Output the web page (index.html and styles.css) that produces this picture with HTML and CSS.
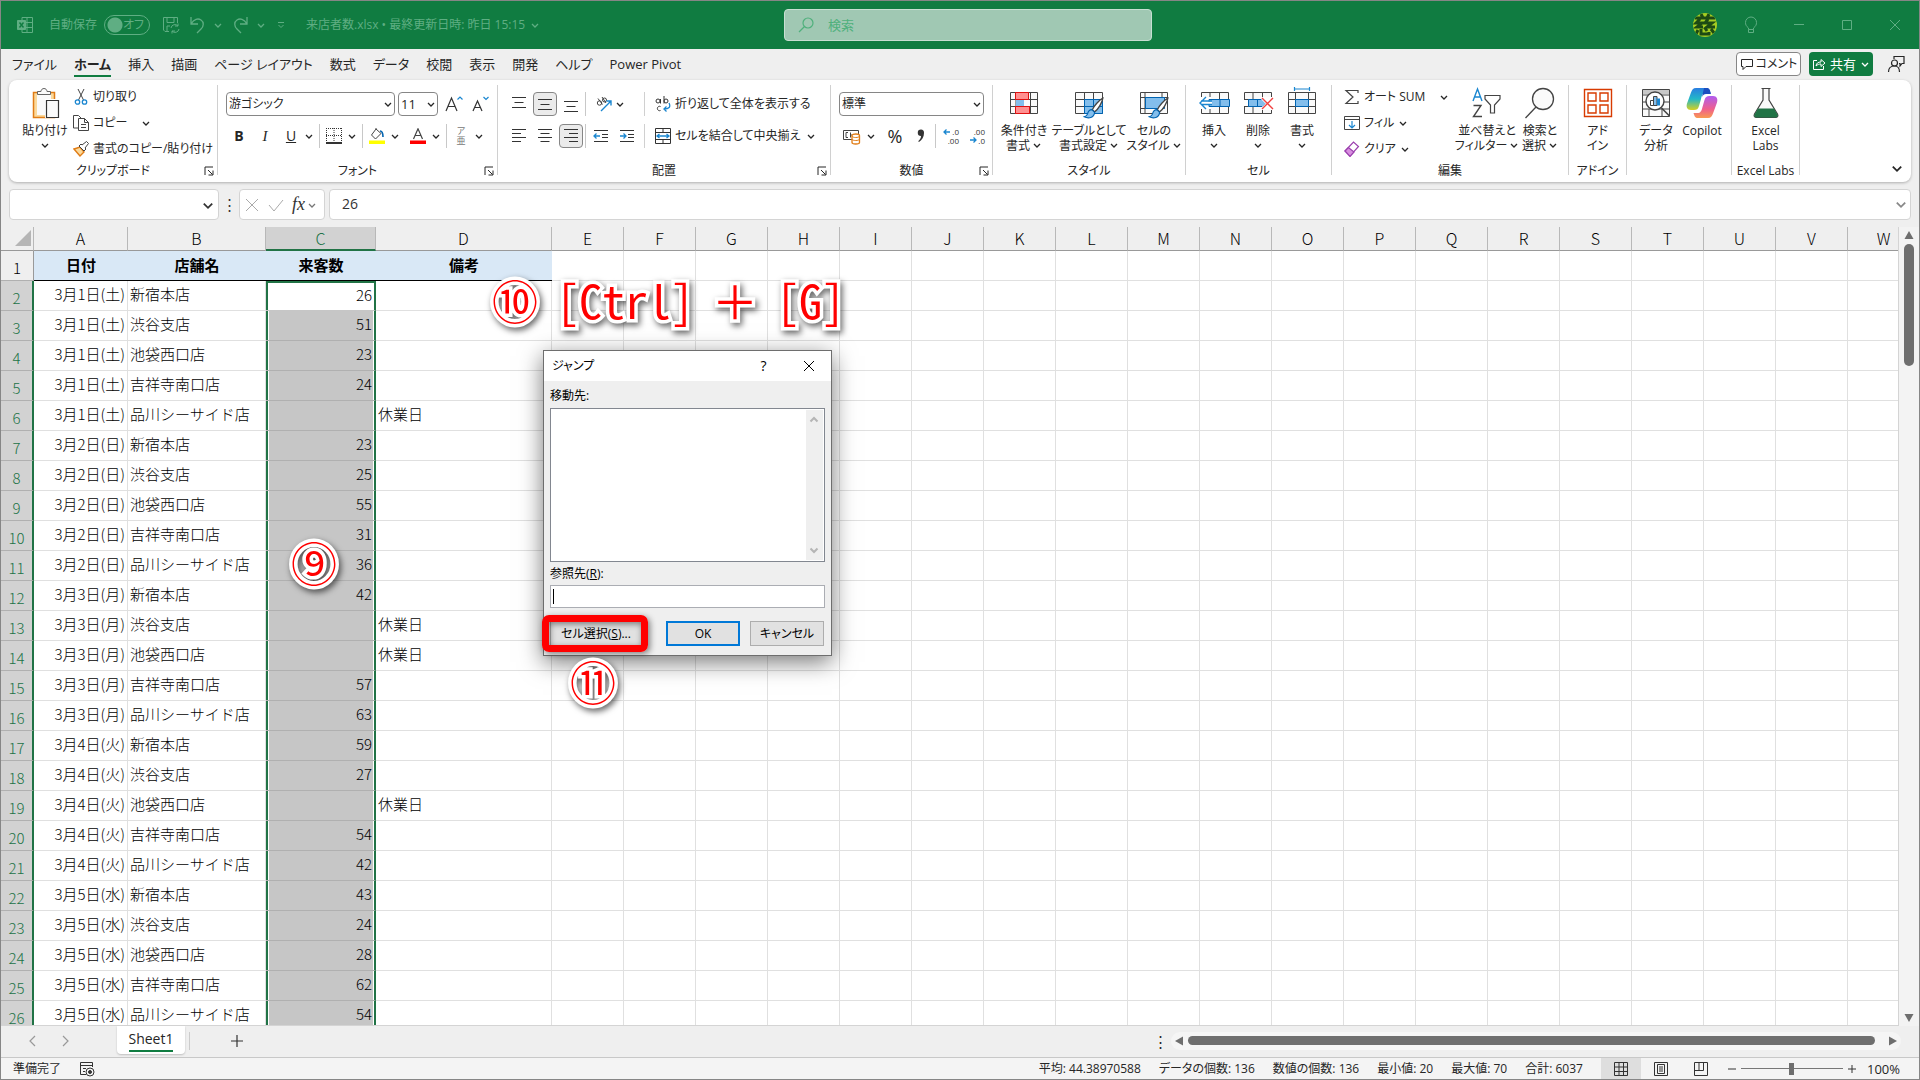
FILE: index.html
```html
<!DOCTYPE html>
<html lang="ja">
<head>
<meta charset="utf-8">
<title>来店者数.xlsx</title>
<link rel="stylesheet" href="styles.css">
</head>
<body>
<svg class="defs" aria-hidden="true">
  <symbol id="chev" viewBox="0 0 10 10"><path d="M2 4l3 3 3-3" fill="none" stroke="currentColor" stroke-width="1.3"/></symbol>
  <symbol id="launch" viewBox="0 0 10 10"><path d="M9 1H1v8M4 4l4.500 4.500M9 4.500V9H4.500" fill="none" stroke="currentColor"/></symbol>
  <symbol id="brush" viewBox="0 0 20 20"><path d="M18.500 1c-3 1.500-8.500 7.500-9.500 10.500l2 2C14 11.500 18 5 18.500 1z" fill="#fff" stroke="#444" stroke-width="1.200"/><path d="M8.500 11.500c-3 0-3.500 2-4 4-.5 1.500-1.500 2-3 2.500 4 2 9 1 9.500-4z" fill="#83beec" stroke="#0063b1"/></symbol>
</svg>

<div class="app">
  <header class="title">
    <div class="title-left">
      <svg class="i16" viewBox="0 0 16 16" fill="none" stroke="currentColor"><path d="M5 3V.5h10.500v15H5V13M10 .5v15M5 5.500h10.500M5 10.500h10.500"/><path d="M.5 3.500h8v9h-8z" fill="#5fae83"/><path d="M2.500 5.500l4 5M6.500 5.500l-4 5" stroke="#107c41" stroke-width="1.400"/></svg>
      <label class="autosave"><span>自動保存</span><span class="switch"><input type="checkbox"><span>オフ</span></span></label>
      <button class="tb" aria-label="保存"><svg class="i18" viewBox="0 0 18 18" fill="none" stroke="currentColor"><path d="M7 15.500H3L1.500 14V1.500h14V7M5 1.500v5h7v-5M5 15v-5h3M9 12a4 4 0 0 1 7-2M16 7.500V10h-3M17 13a4 4 0 0 1-7 2M10 17.500V15h3"/></svg></button>
      <button class="tb" aria-label="元に戻す"><svg class="i18" viewBox="0 0 18 18" fill="none" stroke="currentColor" stroke-width="1.300"><path d="M2 1v7h7M2 8c3-5 7-6 10-4s3 6 0 9l-4 4"/></svg><svg class="cv"><use href="#chev"/></svg></button>
      <button class="tb" aria-label="やり直し"><svg class="i18" viewBox="0 0 18 18" fill="none" stroke="currentColor" stroke-width="1.300"><path d="M15 1v7H8M15 8c-3-5-7-6-10-4s-3 6 0 9l4 4"/></svg><svg class="cv"><use href="#chev"/></svg></button>
      <button class="tb qat" aria-label="クイック アクセス ツール バーのユーザー設定"><svg class="cv" viewBox="0 0 10 10" fill="none" stroke="currentColor"><path d="M2 2.500h6M2.500 5l2.500 2.500L7.500 5"/></svg></button>
      <span class="doc">来店者数.xlsx • 最終更新日時: 昨日 15:15</span><svg class="cv"><use href="#chev"/></svg>
    </div>
    <label class="search"><svg class="i18" viewBox="0 0 18 18" fill="none" stroke="currentColor" stroke-width="1.200"><circle cx="11" cy="7" r="5"/><path d="M7.500 10.500L2 16"/></svg><input type="text" placeholder="検索" aria-label="検索"></label>
    <div class="title-right">
      <svg class="avatar" viewBox="0 0 24 24"><clipPath id="round"><circle cx="12" cy="12" r="12"/></clipPath><circle cx="12" cy="12" r="12" fill="#a4cc22"/><g clip-path="url(#round)"><path d="M2 5h20M8 1l2 4M16 1l-2 4M7 6l-4 4h6l-5 4h6M15 6l-3 4h7l-5 4h8M5 17l-2 4M8 16v5h8v-2M12 15l2 3M18 16l3 4" fill="none" stroke="#1d4a14" stroke-width="3"/></g></svg>
      <button class="wb" aria-label="ヒント"><svg class="i18" viewBox="0 0 18 18" fill="none" stroke="currentColor"><path d="M6.500 13.500V12C4 10 3.500 8.500 3.500 6.500a5.500 5.500 0 0 1 11 0c0 2-.5 3.500-3 5.500v1.500zM6.500 13.500v3h5v-3"/></svg></button>
      <button class="wb" aria-label="最小化"><svg class="i18" viewBox="0 0 18 18" stroke="currentColor"><path d="M4 8.500h10"/></svg></button>
      <button class="wb" aria-label="最大化"><svg class="i18" viewBox="0 0 18 18" stroke="currentColor" fill="none"><path d="M4.500 4.500h9v9h-9z"/></svg></button>
      <button class="wb" aria-label="閉じる"><svg class="i18" viewBox="0 0 18 18" stroke="currentColor"><path d="M4 4l10 10M14 4L4 14"/></svg></button>
    </div>
  </header>

  <nav class="tabs">
    <a href="#">ファイル</a><a href="#" class="on">ホーム</a><a href="#">挿入</a><a href="#">描画</a><a href="#">ページ レイアウト</a><a href="#">数式</a><a href="#">データ</a><a href="#">校閲</a><a href="#">表示</a><a href="#">開発</a><a href="#">ヘルプ</a><a href="#">Power Pivot</a>
    <div class="tabs-right">
      <button class="comment"><svg class="i14" viewBox="0 0 14 14" fill="none" stroke="currentColor"><path d="M1.500 2.500h11v7H6l-3 3v-3H1.500z"/></svg>コメント</button>
      <button class="share"><svg class="i14" viewBox="0 0 14 14" fill="none" stroke="currentColor"><path d="M5 3.500H1.500v9h10V9M4 9c.5-3 2-4 5-4V2.500L13 6 9 9.500V7C7 7 5.500 7.500 4 9z"/></svg>共有<svg class="cv"><use href="#chev"/></svg></button>
      <button class="plain" aria-label="ユーザー"><svg class="i18" viewBox="0 0 18 18" fill="none" stroke="currentColor" stroke-width="1.200"><path d="M7 4V1.500h10v7h-2l-2 2.500V8.500h-1"/><circle cx="7.500" cy="8" r="3"/><path d="M1.500 17c0-4 2.500-6 6-6s5 2 5 6"/></svg></button>
    </div>
  </nav>

  <section class="ribbon">
    <div class="grp g-clip">
      <div class="body">
        <button class="big w56"><svg class="i32" viewBox="0 0 32 32" fill="none"><path d="M4.500 5.500h21v25h-21z" fill="#fbd99b" stroke="#e07c16" stroke-width="1.500"/><path d="M8 8h14v20H8z" fill="#fafafa"/><path d="M8.500 7.500v-3H12c0-4 6-4 6 0h3.500v3z" fill="#fafafa" stroke="#666"/><path d="M16 12h15v19H16z" fill="#fff"/><path d="M17.500 13.500h12v17h-12z" fill="#fafafa" stroke="#333" stroke-width="1.200"/></svg><span>貼り付け</span><svg class="cv"><use href="#chev"/></svg></button>
        <div class="list">
          <button><svg class="i16" viewBox="0 0 16 16" fill="none"><path d="M5 0l5.500 11M11 0L5.500 11" stroke="#444"/><circle cx="4.500" cy="13" r="2.200" stroke="#1a86d0" stroke-width="1.300"/><circle cx="11.500" cy="13" r="2.200" stroke="#1a86d0" stroke-width="1.300"/></svg>切り取り</button>
          <button><svg class="i16" viewBox="0 0 16 16" fill="#fff" stroke="#444"><path d="M.5.500h5L8 3v10H.5z"/><path d="M5.500 3.500h6l4 4v8h-10zM11.500 3.500v4h4M8 9.500h5M8 12.500h5"/></svg>コピー<svg class="cv far"><use href="#chev"/></svg></button>
          <button><svg class="i16" viewBox="0 0 16 16"><path d="M1 8l6-2 4 5-4 4z" fill="#fbd99b" stroke="#e07c16" stroke-width="1.400"/><path d="M6 5l5 5 2-2-1-1 3.500-4.500L13.500.5 9 4 8 3z" fill="#fff" stroke="#444"/></svg>書式のコピー/貼り付け</button>
        </div>
      </div>
      <div class="name">クリップボード<svg class="ln"><use href="#launch"/></svg></div>
    </div>

    <div class="grp g-font">
      <div class="body rows">
        <div class="row">
          <div class="combo w169"><select aria-label="フォント"><option>游ゴシック</option></select><svg class="cv"><use href="#chev"/></svg></div>
          <div class="combo w40"><select aria-label="フォント サイズ"><option>11</option></select><svg class="cv"><use href="#chev"/></svg></div>
          <button class="ib26 ml" aria-label="拡大"><svg class="i18" viewBox="0 0 18 18" fill="none"><path d="M1 16L6.500 3 12 16M3 11.500h7" stroke="#333" stroke-width="1.200"/><path d="M12.500 4.500L15 2l2.500 2.500" stroke="#1a86d0" stroke-width="1.200"/></svg></button>
          <button class="ib26" aria-label="縮小"><svg class="i18" viewBox="0 0 18 18" fill="none"><path d="M2 16L6.500 6 11 16M3.500 12.500h6" stroke="#333" stroke-width="1.200"/><path d="M12.500 2L15 4.500 17.500 2" stroke="#1a86d0" stroke-width="1.200"/></svg></button>
        </div>
        <div class="row">
          <button class="ib26 fb">B</button><button class="ib26 fi">I</button><button class="ib26 fu">U</button><svg class="cv"><use href="#chev"/></svg>
          <i class="sep"></i>
          <button class="split" aria-label="罫線"><svg class="i16" viewBox="0 0 16 16" stroke="#333" fill="none"><path d="M0 .5h16M.5 0v14M15.500 0v14M8 0v14M0 7.500h16" stroke-dasharray="1 1"/><path d="M0 15h16" stroke="#000" stroke-width="1.600"/></svg><svg class="cv"><use href="#chev"/></svg></button>
          <i class="sep"></i>
          <button class="split" aria-label="塗りつぶし"><svg class="i16" viewBox="0 0 16 16"><path d="M7 1L2.500 7l4 4L12 5.500 7 1V0" fill="none" stroke="#444"/><path d="M11 3c3 0 3 3 3 6" fill="none" stroke="#0063b1" stroke-width="1.600"/><path d="M0 12.500h16V16H0z" fill="#ff0"/></svg><svg class="cv"><use href="#chev"/></svg></button>
          <button class="split ml10" aria-label="フォントの色"><svg class="i16" viewBox="0 0 16 16"><path d="M3.500 11L8 .8 12.500 11M5 7.500h6" fill="none" stroke="#444" stroke-width="1.200"/><path d="M0 12.500h16V16H0z" fill="#f00"/></svg><svg class="cv"><use href="#chev"/></svg></button>
          <i class="sep"></i>
          <button class="split" aria-label="ふりがな"><span class="ruby"><small>ア</small><small>亜</small></span><svg class="cv"><use href="#chev"/></svg></button>
        </div>
      </div>
      <div class="name">フォント<svg class="ln"><use href="#launch"/></svg></div>
    </div>

    <div class="grp g-align">
      <div class="body rows">
        <div class="row">
          <button class="ib26" aria-label="上揃え"><svg class="i16" viewBox="0 0 16 16"><path d="M1 1.500h14M3.500 6.500h9M1 11.500h14"/></svg></button>
          <button class="ib26 pick" aria-label="上下中央揃え"><svg class="i16" viewBox="0 0 16 16"><path d="M1 3.500h14M3.500 8.500h9M1 13.500h14"/></svg></button>
          <button class="ib26" aria-label="下揃え"><svg class="i16" viewBox="0 0 16 16"><path d="M1 5.500h14M3.500 10.500h9M1 15.500h14"/></svg></button>
          <i class="sep0"></i>
          <button class="split" aria-label="方向"><svg class="i18" viewBox="0 0 18 18" fill="none"><circle cx="4.500" cy="8" r="2.200" stroke="#444"/><path d="M3 3.500l4.500 6M7 2l4 6" stroke="#444"/><circle cx="9.500" cy="5" r="2" stroke="#444"/><path d="M6 16L16 6M11.500 6H16v4.500" stroke="#1a86d0" stroke-width="1.400"/></svg><svg class="cv"><use href="#chev"/></svg></button>
          <button class="wide"><svg class="i16" viewBox="0 0 16 16"><circle cx="3" cy="5" r="2"/><path d="M5.500 3v4.500M9 0v7.500"/><circle cx="11" cy="5" r="2"/><path d="M5.500 10.500a2.200 2.200 0 1 0 0 4"/><path class="blue" d="M14 7c2 4 0 6-5 6M11.500 10.500L9 13l2.500 2.500"/></svg>折り返して全体を表示する</button>
        </div>
        <div class="row">
          <button class="ib26" aria-label="左揃え"><svg class="i16" viewBox="0 0 16 16"><path d="M1 1.500h14M1 5.500h9M1 9.500h14M1 13.500h9"/></svg></button>
          <button class="ib26" aria-label="中央揃え"><svg class="i16" viewBox="0 0 16 16"><path d="M1 1.500h14M3.500 5.500h9M1 9.500h14M3.500 13.500h9"/></svg></button>
          <button class="ib26 pick" aria-label="右揃え"><svg class="i16" viewBox="0 0 16 16"><path d="M1 1.500h14M6 5.500h9M1 9.500h14M6 13.500h9"/></svg></button>
          <i class="sep0"></i>
          <button class="ib26" aria-label="インデントを減らす"><svg class="i16" viewBox="0 0 16 16"><path d="M1 2.500h14M9 6.500h6M9 9.500h6M1 13.500h14"/><path class="blue" d="M7 8H1M3.500 5.500L1 8l2.500 2.500"/></svg></button>
          <button class="ib26" aria-label="インデントを増やす"><svg class="i16" viewBox="0 0 16 16"><path d="M1 2.500h14M9 6.500h6M9 9.500h6M1 13.500h14"/><path class="blue" d="M1 8h6M4.500 5.500L7 8l-2.500 2.500"/></svg></button>
          <button class="wide m2"><svg class="i16" viewBox="0 0 16 16"><path d="M.5.500h15v15H.5zM.5 4.500h15M.5 11.500h15M8 .5v4M8 11.500v4"/><path class="blue" d="M2 8h12M4.500 6L2 8l2.500 2M11.500 6L14 8l-2.500 2"/></svg>セルを結合して中央揃え<svg class="cv far"><use href="#chev"/></svg></button>
        </div>
      </div>
      <div class="name">配置<svg class="ln"><use href="#launch"/></svg></div>
    </div>

    <div class="grp g-num">
      <div class="body rows">
        <div class="row"><div class="combo w145"><select aria-label="表示形式"><option>標準</option></select><svg class="cv"><use href="#chev"/></svg></div></div>
        <div class="row">
          <button class="split" aria-label="通貨"><svg class="i18" viewBox="0 0 18 18" fill="none"><path d="M.5 3.500h15v9H.5z" stroke="#444"/><path d="M5 5.500H3v5h2M7.500 5.500v5M7.500 8h2" stroke="#444"/><path d="M9 8.500c0-2 7.500-2 7.500 0v7c0 2-7.500 2-7.500 0z" fill="#fff" stroke="#e07c16" stroke-width="1.300"/><path d="M9 9c0 2 7.500 2 7.500 0M9 12c0 2 7.500 2 7.500 0" stroke="#e07c16"/></svg><svg class="cv"><use href="#chev"/></svg></button>
          <button class="ib26 pct">%</button><button class="ib26" aria-label="桁区切り"><svg class="i16" viewBox="0 0 16 16"><path d="M8 1.500a3 3 0 0 1 3 3.500c0 4-2 7-5 9l-.8-.8C7 11.500 8 10 8 8a3.200 3.200 0 0 1 0-6.500z" fill="#333"/></svg></button>
          <i class="sep0"></i>
          <button class="ib26" aria-label="小数点以下の表示桁数を増やす"><svg class="i16" viewBox="0 0 16 16"><text x="16" y="7">.0</text><text x="16" y="16">.00</text><path class="blue" d="M7 4H1M3.500 1.500L1 4l2.500 2.500"/></svg></button>
          <button class="ib26" aria-label="小数点以下の表示桁数を減らす"><svg class="i16" viewBox="0 0 16 16"><text x="16" y="7">.00</text><text x="16" y="16">.0</text><path class="blue" d="M1 12h6M4.500 9.500L7 12l-2.500 2.500"/></svg></button>
        </div>
      </div>
      <div class="name">数値<svg class="ln"><use href="#launch"/></svg></div>
    </div>

    <div class="grp g-style">
      <div class="body">
        <button class="big w56"><svg class="i32" viewBox="0 0 32 32"><path d="M2.500 5.500h27v21h-27zM8 5v22M15 5v22M22.500 5v22M2 12.500h28M2 19.500h28" fill="#fafafa" stroke="#444"/><path d="M8 13h8v6H8z" fill="#83beec"/><path d="M7.500 5.500h13v7h-13zM7.500 19.500h14v7h-14z" fill="#ff9090" stroke="#e01010"/></svg><span>条件付き<br>書式<svg class="cv"><use href="#chev"/></svg></span></button>
        <button class="big w74"><svg class="i32" viewBox="0 0 32 32"><path d="M2.500 5.500h27v21h-27zM11.500 5v22M20.500 5v22M2 12.500h28M2 19.500h28" fill="#fafafa" stroke="#444"/><path d="M11.500 12.500h18v14h-18z" fill="#83beec" stroke="#0063b1"/><path d="M20.500 12v15M11 19.500h18" stroke="#0063b1"/><use href="#brush" x="9" y="10" width="23" height="22"/></svg><span>テーブルとして<br>書式設定<svg class="cv"><use href="#chev"/></svg></span></button>
        <button class="big w56"><svg class="i32" viewBox="0 0 32 32"><path d="M2.500 5.500h27v21h-27zM7 5v22M24 5v6M2 10.500h28M2 21.500h10" fill="#fafafa" stroke="#444"/><path d="M7.500 10.500h19v11h-19z" fill="#83beec" stroke="#0063b1"/><use href="#brush" x="9" y="10" width="23" height="22"/></svg><span>セルの<br>スタイル<svg class="cv"><use href="#chev"/></svg></span></button>
      </div>
      <div class="name">スタイル</div>
    </div>

    <div class="grp g-cell">
      <div class="body">
        <button class="big w44"><svg class="i32" viewBox="0 0 32 32"><path d="M3.500 5.500h27v21h-27zM12 5v22M21.500 5v22M3 12.500h28M3 19.500h28" fill="#fafafa" stroke="#444"/><path d="M0 10h13v12H0z" fill="#fff"/><path d="M11 12.500h20.500v7H11zM22 12v7" fill="#83beec" stroke="#0063b1"/><path d="M14 14.500H3v3h11z" fill="#fff"/><path d="M14 14H3M14 17.500H3M8 10l-6 6 6 6" fill="none" stroke="#1a86d0" stroke-width="1.400"/></svg><span>挿入</span><svg class="cv"><use href="#chev"/></svg></button>
        <button class="big w44"><svg class="i32" viewBox="0 0 32 32"><path d="M2.500 5.500h27v21h-27zM11 5v22M20.500 5v22M2 12.500h28M2 19.500h28" fill="#fafafa" stroke="#444"/><path d="M19 10h12v13H19zM0 13h6v6H0z" fill="#fff"/><path d="M6.500 12.500h14l4 3-4 4h-14zM15.500 12v7" fill="#83beec" stroke="#0063b1"/><path d="M20 11l11 11M31 11L20 22" stroke="#fff" stroke-width="3"/><path d="M20 11l11 11M31 11L20 22" stroke="#f04040" stroke-width="1.400"/></svg><span>削除</span><svg class="cv"><use href="#chev"/></svg></button>
        <button class="big w44"><svg class="i32" viewBox="0 0 32 32"><path d="M2.500 5.500h27v21h-27zM9.500 5v22M22.500 5v22M2 12.500h28M2 19.500h28" fill="#fafafa" stroke="#444"/><path d="M9.500 12.500h13v7h-13z" fill="#83beec" stroke="#0063b1"/><path d="M8.500 0v4M23.500 0v4M8 2h15" stroke="#1a86d0" stroke-width="1.200"/></svg><span>書式</span><svg class="cv"><use href="#chev"/></svg></button>
      </div>
      <div class="name">セル</div>
    </div>

    <div class="grp g-edit">
      <div class="body">
        <div class="list w110">
          <button><svg class="i16" viewBox="0 0 16 16" fill="none" stroke="#444" stroke-width="1.200"><path d="M14 4V1.500H2L9 8l-7 6.500h12V12"/></svg>オート SUM<svg class="cv far"><use href="#chev"/></svg></button>
          <button><svg class="i16" viewBox="0 0 16 16" fill="none"><path d="M.5 1.500h15v13H.5zM.5 4.500h15" stroke="#444"/><path d="M8 6v7M5 10l3 3 3-3" stroke="#1a86d0" stroke-width="1.200"/></svg>フィル<svg class="cv"><use href="#chev"/></svg></button>
          <button><svg class="i16" viewBox="0 0 16 16"><path d="M1 10l8.500-9 5 4.500-8.500 9.500z" fill="#fff" stroke="#9b3fae" stroke-width="1.200"/><path d="M1 10l3.500-3.500L10 11l-4 4.500z" fill="#d98fe0" stroke="#9b3fae" stroke-width="1.200"/></svg>クリア<svg class="cv"><use href="#chev"/></svg></button>
        </div>
        <button class="big w60"><svg class="i32" viewBox="0 0 32 32" fill="none" stroke="#444" stroke-width="1.400"><path d="M2 14L6.500 2 11 14M4 10h5" stroke="#1a86d0"/><path d="M2.500 18.500H10l-7.500 11H11"/><path d="M14 8.500h15v3.500l-5.500 6v8h-4v-8L14 12z" stroke-width="1.200"/></svg><span>並べ替えと<br>フィルター<svg class="cv"><use href="#chev"/></svg></span></button>
        <button class="big w46"><svg class="i32" viewBox="0 0 32 32" fill="none" stroke="#444" stroke-width="1.300"><circle cx="19" cy="12" r="10.500" fill="#fafafa"/><path d="M12 20L1.500 31"/></svg><span>検索と<br>選択<svg class="cv"><use href="#chev"/></svg></span></button>
      </div>
      <div class="name">編集</div>
    </div>

    <div class="grp g-add">
      <div class="body"><button class="big w56"><svg class="i32" viewBox="0 0 32 32" fill="none" stroke="#d83b01" stroke-width="1.400"><path d="M2.500 2.500h27v27h-27zM6 6h8v8H6zM18 6h8v8h-8zM6 18h8v8H6zM18 18h8v8h-8z"/></svg><span>アド<br>イン</span></button></div>
      <div class="name">アドイン</div>
    </div>

    <div class="grp g-ana">
      <div class="body">
        <button class="big w46"><svg class="i32" viewBox="0 0 32 32"><path d="M2.500 2.500h27v27h-27zM2 8h28M2 15h28M2 22h28M9 22v8M22 22v8" fill="#fafafa" stroke="#444"/><path d="M3 3h26v4H3z" fill="#c8c8c8"/><circle cx="15" cy="14" r="9" fill="#fff" stroke="#444" stroke-width="1.400"/><path d="M21.500 21l8 8" stroke="#444" stroke-width="1.600"/><path d="M10.500 13.500h3v5h-3z" fill="#fff" stroke="#444"/><path d="M13.500 9.500h3.500v9h-3.500z" fill="#83beec" stroke="#444"/><path d="M17 11.500h3v7h-3z" fill="#1a86d0"/></svg><span>データ<br>分析</span></button>
        <button class="big w46"><svg class="i32" viewBox="0 0 32 32"><defs><linearGradient id="ca" x1="0" y1="0" x2="0" y2="1"><stop offset="0" stop-color="#2a7de1"/><stop offset=".5" stop-color="#22b8c8"/><stop offset="1" stop-color="#d8d020"/></linearGradient><linearGradient id="cb" x1="0" y1="0" x2="0" y2="1"><stop offset="0" stop-color="#b05cf0"/><stop offset=".6" stop-color="#f0608c"/><stop offset="1" stop-color="#f89a50"/></linearGradient></defs><path d="M10 1h10c3 0 3.500 2 4.500 5h-5c-3 0-3.500 2-4.500 6l-2 7c-1 3-2 4-5 4H5c-4 0-5-3-4-6.500l4-11C6 3 7 1 10 1z" fill="url(#ca)"/><path d="M18 1h3c2.500 0 3 2 4 6h-5c-2 0-3 1-4 3z" fill="#1b4fc0"/><path d="M22 31H12c-3 0-3.500-2-4.500-5h4c3 0 4-2 5-6l2-7c1-3 2-4 5-4H27c4 0 5 3 4 6.500l-4 11C26 29 25 31 22 31z" fill="url(#cb)"/></svg><span>Copilot</span></button>
      </div>
      <div class="name"></div>
    </div>

    <div class="grp g-lab">
      <div class="body"><button class="big w56"><svg class="i32" viewBox="0 0 32 32"><path d="M13 2v11L4.500 27c-1 2 0 3.500 2 3.500h19c2 0 3-1.500 2-3.500L19 13V2M11.500 1.500h9" fill="#fafafa" stroke="#444" stroke-width="1.200"/><path d="M8 21.500h16l3.500 6c.8 1.500 0 3-2 3h-19c-2 0-2.800-1.500-2-3z" fill="#217346"/></svg><span>Excel<br>Labs</span></button></div>
      <div class="name">Excel Labs</div>
    </div>
    <button class="fold" aria-label="リボンを折りたたむ"><svg class="i14"><use href="#chev"/></svg></button>
  </section>

  <section class="fbar">
    <div class="namebox"><input type="text" aria-label="名前ボックス"><svg class="i14"><use href="#chev"/></svg></div>
    <span class="dots">⋮</span>
    <div class="fx"><svg class="i16" viewBox="0 0 16 16" stroke="#aaa"><path d="M2 2l12 12M14 2L2 14"/></svg><svg class="i16" viewBox="0 0 16 16" stroke="#aaa" fill="none"><path d="M1 8l5 6L15 3"/></svg><b>fx</b><svg class="cv"><use href="#chev"/></svg></div>
    <div class="formula"><input type="text" value="26" aria-label="数式バー"><svg class="i14"><use href="#chev"/></svg></div>
  </section>

  <main class="work">
    <div class="grid">
    <table>
      <colgroup><col class="c0"><col class="ca"><col class="cb"><col class="cc"><col class="cd"><col span="19" class="ce"></colgroup>
      <thead><tr><th class="corner"><svg viewBox="0 0 16 16"><path d="M16 0v16H0z" fill="#b5b5b5"/></svg></th><th>A</th><th>B</th><th class="sel">C</th><th>D</th><th>E</th><th>F</th><th>G</th><th>H</th><th>I</th><th>J</th><th>K</th><th>L</th><th>M</th><th>N</th><th>O</th><th>P</th><th>Q</th><th>R</th><th>S</th><th>T</th><th>U</th><th>V</th><th>W</th></tr></thead>
      <tbody>
      <tr class="heads"><th>1</th><td>日付</td><td>店舗名</td><td>来客数</td><td>備考</td><td class="rest" colspan="19"></td></tr>
      <tr class="first"><th>2</th><td>3月1日(土)</td><td>新宿本店</td><td>26</td><td></td><td class="rest" colspan="19"></td></tr>
      <tr><th>3</th><td>3月1日(土)</td><td>渋谷支店</td><td>51</td><td></td><td class="rest" colspan="19"></td></tr>
      <tr><th>4</th><td>3月1日(土)</td><td>池袋西口店</td><td>23</td><td></td><td class="rest" colspan="19"></td></tr>
      <tr><th>5</th><td>3月1日(土)</td><td>吉祥寺南口店</td><td>24</td><td></td><td class="rest" colspan="19"></td></tr>
      <tr><th>6</th><td>3月1日(土)</td><td>品川シーサイド店</td><td></td><td>休業日</td><td class="rest" colspan="19"></td></tr>
      <tr><th>7</th><td>3月2日(日)</td><td>新宿本店</td><td>23</td><td></td><td class="rest" colspan="19"></td></tr>
      <tr><th>8</th><td>3月2日(日)</td><td>渋谷支店</td><td>25</td><td></td><td class="rest" colspan="19"></td></tr>
      <tr><th>9</th><td>3月2日(日)</td><td>池袋西口店</td><td>55</td><td></td><td class="rest" colspan="19"></td></tr>
      <tr><th>10</th><td>3月2日(日)</td><td>吉祥寺南口店</td><td>31</td><td></td><td class="rest" colspan="19"></td></tr>
      <tr><th>11</th><td>3月2日(日)</td><td>品川シーサイド店</td><td>36</td><td></td><td class="rest" colspan="19"></td></tr>
      <tr><th>12</th><td>3月3日(月)</td><td>新宿本店</td><td>42</td><td></td><td class="rest" colspan="19"></td></tr>
      <tr><th>13</th><td>3月3日(月)</td><td>渋谷支店</td><td></td><td>休業日</td><td class="rest" colspan="19"></td></tr>
      <tr><th>14</th><td>3月3日(月)</td><td>池袋西口店</td><td></td><td>休業日</td><td class="rest" colspan="19"></td></tr>
      <tr><th>15</th><td>3月3日(月)</td><td>吉祥寺南口店</td><td>57</td><td></td><td class="rest" colspan="19"></td></tr>
      <tr><th>16</th><td>3月3日(月)</td><td>品川シーサイド店</td><td>63</td><td></td><td class="rest" colspan="19"></td></tr>
      <tr><th>17</th><td>3月4日(火)</td><td>新宿本店</td><td>59</td><td></td><td class="rest" colspan="19"></td></tr>
      <tr><th>18</th><td>3月4日(火)</td><td>渋谷支店</td><td>27</td><td></td><td class="rest" colspan="19"></td></tr>
      <tr><th>19</th><td>3月4日(火)</td><td>池袋西口店</td><td></td><td>休業日</td><td class="rest" colspan="19"></td></tr>
      <tr><th>20</th><td>3月4日(火)</td><td>吉祥寺南口店</td><td>54</td><td></td><td class="rest" colspan="19"></td></tr>
      <tr><th>21</th><td>3月4日(火)</td><td>品川シーサイド店</td><td>42</td><td></td><td class="rest" colspan="19"></td></tr>
      <tr><th>22</th><td>3月5日(水)</td><td>新宿本店</td><td>43</td><td></td><td class="rest" colspan="19"></td></tr>
      <tr><th>23</th><td>3月5日(水)</td><td>渋谷支店</td><td>24</td><td></td><td class="rest" colspan="19"></td></tr>
      <tr><th>24</th><td>3月5日(水)</td><td>池袋西口店</td><td>28</td><td></td><td class="rest" colspan="19"></td></tr>
      <tr><th>25</th><td>3月5日(水)</td><td>吉祥寺南口店</td><td>62</td><td></td><td class="rest" colspan="19"></td></tr>
      <tr><th>26</th><td>3月5日(水)</td><td>品川シーサイド店</td><td>54</td><td></td><td class="rest" colspan="19"></td></tr>
      </tbody>
    </table>
    </div>
    <div class="vscroll"><svg viewBox="0 0 10 10"><path d="M5 1l4.500 8h-9z"/></svg><div class="vthumb"></div><svg class="end" viewBox="0 0 10 10"><path d="M5 9L.5 1h9z"/></svg></div>
  </main>

  <footer class="sheets">
    <button class="nav" aria-label="前のシート"><svg class="i14" viewBox="0 0 14 14"><path d="M9 2L4 7l5 5"/></svg></button>
    <button class="nav" aria-label="次のシート"><svg class="i14" viewBox="0 0 14 14"><path d="M5 2l5 5-5 5"/></svg></button>
    <button class="sheet"><span>Sheet1</span></button>
    <i class="bar"></i>
    <button class="nav plus" aria-label="新しいシート"><svg class="i14" viewBox="0 0 14 14"><path d="M7 1v12M1 7h12"/></svg></button>
    <span class="dots">⋮</span>
    <div class="hscroll"><svg viewBox="0 0 10 10"><path d="M1 5l8-4.500v9z"/></svg><div class="hthumb"></div><svg viewBox="0 0 10 10"><path d="M9 5L1 .5v9z"/></svg></div>
  </footer>

  <footer class="status">
    <span>準備完了</span>
    <svg class="i16 rec" viewBox="0 0 16 16" fill="none" stroke="#333"><path d="M7 13.500H1.500v-12h12V6M1.500 4.500h12M4 7.500h3M4 10.500h2"/><circle cx="11" cy="11" r="4"/><circle cx="11" cy="11" r="1.500" fill="#333"/></svg>
    <div class="stats"><span>平均: 44.38970588</span><span>データの個数: 136</span><span>数値の個数: 136</span><span>最小値: 20</span><span>最大値: 70</span><span>合計: 6037</span></div>
    <button class="view on" aria-label="標準"><svg class="i14" viewBox="0 0 14 14"><path d="M.5.500h13v13H.5zM5 .5v13M9.500.500v13M.5 5h13M.5 9.500h13"/></svg></button>
    <button class="view" aria-label="ページ レイアウト"><svg class="i14" viewBox="0 0 14 14"><path d="M.5.500h13v13H.5zM3.500 2.500h7v9h-7zM5 5h4M5 7h4M5 9h4"/></svg></button>
    <button class="view" aria-label="改ページ プレビュー"><svg class="i14" viewBox="0 0 14 14"><path d="M.5.500h13v13H.5zM.5 8.500h9v-8M5 .5v8"/></svg></button>
    <button class="zb" aria-label="縮小"><svg class="cv" viewBox="0 0 10 10"><path d="M1 5h8"/></svg></button>
    <input type="range" min="0" max="100" value="50" aria-label="ズーム">
    <button class="zb" aria-label="拡大"><svg class="cv" viewBox="0 0 10 10"><path d="M1 5h8M5 1v8"/></svg></button>
    <span class="pct100">100%</span>
  </footer>
</div>

<form class="dialog" role="dialog" aria-label="ジャンプ">
  <div class="dtitle"><span>ジャンプ</span><button type="button" aria-label="ヘルプ">?</button><button type="button" aria-label="閉じる"><svg class="i14" viewBox="0 0 14 14"><path d="M2 2l10 10M12 2L2 12" stroke="#000"/></svg></button></div>
  <div class="dbody">
    <label for="dest">移動先:</label>
    <div class="dlist"><select id="dest" size="8"></select><div class="dscroll"><svg class="cv" viewBox="0 0 10 10"><path d="M1.500 6.500L5 3l3.500 3.500"/></svg><svg class="cv" viewBox="0 0 10 10"><path d="M1.500 3.500L5 7l3.500-3.500"/></svg></div></div>
    <label for="ref">参照先(<u>R</u>):</label>
    <div class="dref"><input id="ref" type="text"><i></i></div>
    <div class="dbtns"><button type="button" class="special">セル選択(<u>S</u>)...</button><button type="button" class="ok">OK</button><button type="button">キャンセル</button></div>
  </div>
</form>
<div class="frame"></div>
<div class="note n10"><span>⑩</span><span class="half">[Ctrl]</span><span>＋</span><span class="half">[G]</span></div>
<div class="note n9">⑨</div>
<div class="note n11">⑪</div>
</body>
</html>
```
FILE: styles.css
```css
* { box-sizing: border-box; }
body { margin: 0; background: #efefef; color: #262626; font: 12px/16px "Open Sans", "Noto Sans CJK JP", sans-serif; font-feature-settings: "palt"; overflow: hidden; }
button, input, select { font: inherit; color: inherit; font-feature-settings: inherit; margin: 0; padding: 0; border: 0; background: none; outline: 0; }
button { display: flex; align-items: center; justify-content: center; white-space: nowrap; }
input { min-width: 0; }
svg { flex: none; display: block; }
a { color: inherit; text-decoration: none; }
.defs { display: none; }
.app { display: flex; flex-direction: column; height: 100vh; border: 1px solid #868686; }
.cv { width: 10px; height: 10px; }
.i14 { width: 14px; height: 14px; }
.i16 { width: 16px; height: 16px; }
.i18 { width: 18px; height: 18px; }
.i32 { width: 32px; height: 32px; }

.title { flex: none; height: 48px; display: grid; grid-template-columns: 783fr 368px 767fr; align-items: center; background: #107c41; color: #5fae83; }
.title-left { display: flex; align-items: center; padding-left: 16px; }
.autosave { display: flex; align-items: center; gap: 7px; margin-left: 16px; }
.switch { display: grid; align-items: center; justify-items: end; }
.switch > * { grid-area: 1 / 1; }
.switch input { appearance: none; width: 46px; height: 20px; border: 1px solid #5fae83; border-radius: 10px; background: radial-gradient(circle at 10px 9px, #5fae83 7px, transparent 8px); }
.switch span { padding-right: 6px; }
.tb { gap: 6px; margin-left: 12px; }
.tb + .tb { margin-left: 9px; }
.tb.qat { margin-left: 10px; }
.doc { margin: 0 5px 0 20px; }
.search { display: flex; align-items: center; gap: 13px; height: 32px; padding: 0 12px; background: #a0c8b3; border: 1px solid #c7dfd2; border-radius: 4px; color: #4fb07c; font-size: 13px; }
.search input { flex: 1; }
.search input::placeholder { color: #4fb07c; }
.title-right { display: flex; align-items: center; justify-content: flex-end; }
.avatar { width: 24px; height: 24px; margin-right: 10px; }
.wb { width: 48px; height: 48px; }

.tabs { flex: none; height: 31px; display: flex; align-items: stretch; gap: 17px; padding: 3px 8px 0 11px; font-size: 13px; }
.tabs a { display: flex; align-items: center; height: 25px; border-bottom: 2px solid transparent; white-space: nowrap; }
.tabs .on { font-weight: 700; border-color: #107c41; }
.tabs-right { margin-left: auto; display: flex; gap: 8px; }
.tabs-right button { height: 24px; gap: 4px; border-radius: 4px; }
.comment { width: 65px; border: 1px solid #868686; background: #fff; font-size: 12px; }
.tabs-right .comment { gap: 2px; }
.share { width: 64px; background: #107c41; color: #fff; }
.plain { width: 30px; }

.ribbon { flex: none; display: flex; height: 102px; margin: 0 8px; padding-top: 5px; background: #fff; border-radius: 8px; box-shadow: 0 1px 3px #0004; }
.grp { display: flex; flex-direction: column; flex: none; }
.grp > .body { display: flex; height: 76px; border-right: 1px solid #d0d0d0; }
.grp > .name { display: flex; align-items: center; justify-content: center; height: 14px; position: relative; border-right: 1px solid #d0d0d0; white-space: nowrap; line-height: 14px; padding-top: 6px; }
.ln { position: absolute; right: 3px; top: 5px; width: 10px; height: 10px; }
.g-clip { width: 209px; } .g-clip .body { padding-left: 8px; }
.g-font { width: 280px; } .g-font .body { padding-left: 8px; }
.g-align { width: 333px; } .g-align .body { padding-left: 8px; }
.g-num { width: 162px; } .g-num .body { padding-left: 8px; }
.g-style { width: 193px; } .g-style .body { justify-content: center; }
.g-cell { width: 146px; } .g-cell .body { padding-left: 6px; }
.g-edit { width: 237px; } .g-edit .body { padding-left: 12px; }
.g-add { width: 58px; }
.g-ana { width: 105px; } .g-ana .body { padding-left: 6px; }
.g-lab { width: 68px; } .g-add .body, .g-lab .body { justify-content: center; }
.big { flex-direction: column; justify-content: flex-start; padding-top: 2px; line-height: 15px; text-align: center; }
.big span { margin-top: 4px; }
.big span .cv { display: inline-block; margin-left: 2px; vertical-align: baseline; }
.big > .cv { margin-top: 2px; }
.w56 { width: 56px; } .w74 { width: 74px; } .w44 { width: 44px; } .w60 { width: 60px; } .w46 { width: 46px; }
.list { display: flex; flex-direction: column; gap: 6px; padding-top: 2px; }
.list button { justify-content: flex-start; gap: 4px; height: 20px; }
.list .far { margin-left: 10px; }
.w110 { width: 113px; }
.rows { flex-direction: column; gap: 8px; padding-top: 7px; }
.row { display: flex; align-items: center; height: 24px; }
.row button { height: 24px; }
.combo { display: grid; align-items: center; height: 24px; border: 1px solid #868686; border-radius: 4px; }
.combo > * { grid-area: 1 / 1; }
.combo select { appearance: none; width: 100%; height: 22px; padding-left: 2px; }
.combo .cv { justify-self: end; margin-right: 1px; pointer-events: none; }
.w169 { width: 169px; } .w40 { width: 40px; margin-left: 3px; font-size: 13px; } .w145 { width: 145px; }
.ib26 { flex: none; width: 26px; }
.ml { margin-left: 3px; }
.ml10 { margin-left: 10px; }
.fb { font-weight: 700; font-size: 14px; }
.fi { font: italic 15px "Liberation Serif", serif; }
.fu { text-decoration: underline; font-size: 14px; }
.pct { font-size: 18px; }
.split { flex: none; gap: 5px; }
.sep, .sep0 { flex: none; width: 1px; height: 24px; background: #c8c8c8; margin: 0 6px 0 5px; }
.sep0 { margin: 0 2px 0 1px; }
.g-align .split { padding: 0 4px; width: 44px; gap: 2px; }
.g-align .ib26 svg, .wide svg { fill: none; stroke: #333; }
.wide .cv { stroke: none; }
.blue { fill: none; stroke: #1a86d0; stroke-width: 1.300; }
.row .pick { width: 24px; margin: 0 1px; border: 1px solid #868686; border-radius: 4px; background: #ebebeb; }
.row .wide { gap: 4px; padding-left: 10px; margin-left: 12px; border-left: 1px solid #d0d0d0; }
.row .m2 { margin-left: 4px; }
.wide .far { margin-left: 2px; }
.g-num .split { padding: 0 6px 0 4px; }
.g-num svg { overflow: visible; }
.g-num text { font-size: 8px; fill: #333; text-anchor: end; }
.ruby { display: flex; flex-direction: column; width: 16px; align-items: center; color: #777; }
.ruby small { font-size: 9px; line-height: 10px; }
.fold { margin-left: auto; align-self: flex-end; width: 28px; height: 28px; }

.fbar { flex: none; display: flex; height: 31px; margin: 7px 8px; color: #333; }
.namebox, .fx, .formula { display: flex; align-items: center; background: #fff; border: 1px solid #d4d4d4; border-radius: 4px; }
.namebox { width: 210px; padding-right: 3px; }
.namebox input, .formula input { flex: 1; }
.fbar .dots { width: 20px; font-size: 15px; line-height: 30px; text-align: center; }
.fx { width: 86px; padding-left: 4px; gap: 8px; color: #777; }
.fx b { font: italic 18px "Liberation Serif", serif; color: #333; }
.fx .cv { margin-left: -6px; }
.formula { flex: 1; margin-left: 4px; padding: 0 2px 2px 12px; font-size: 14px; }
.formula svg { color: #888; }

.work { flex: 1; min-height: 0; display: flex; }
.grid { flex: 1; min-width: 0; overflow: hidden; border-bottom: 1px solid #d4d4d4; border-right: 1px solid #d4d4d4; background: #fff; }
table { table-layout: fixed; width: 1919px; border-collapse: separate; border-spacing: 0; font: 300 15px/20px "Noto Sans CJK JP", sans-serif; font-feature-settings: normal; color: #000; }
.c0 { width: 33px; } .ca { width: 94px; } .cb { width: 138px; } .cc { width: 110px; } .cd { width: 176px; } .ce { width: 72px; }
th { font-weight: 300; padding: 0; text-align: center; background: #efefef; }
thead th { height: 24px; font-size: 16px; padding-bottom: 2px; border-right: 1px solid #b8b8b8; border-bottom: 1px solid #999; }
.corner svg { width: 16px; height: 16px; margin-left: 14px; }
thead .sel { background: #d2d2d2; color: #217346; border-bottom: 2px solid #217346; padding-bottom: 1px; }
tbody th { height: 30px; padding-top: 5px; background: #d2d2d2; color: #217346; border-bottom: 1px solid #b0b0b0; border-right: 2px solid #217346; }
td { padding: 0 2px 4px; height: 30px; white-space: nowrap; overflow: hidden; border-right: 1px solid #e0e0e0; border-bottom: 1px solid #e0e0e0; }
td:nth-child(2) { text-align: right; }
td:nth-child(4) { text-align: right; padding-right: 2px; background: #c6c6c6; border-bottom-color: #b0b0b0; border-right: 2px solid #217346; box-shadow: inset 2px 0 #217346, inset 3px 0 #fff, inset -1px 0 #fff; }
.first td:nth-child(4) { background: #fff; border-bottom-color: #c6c6c6; border-top: 2px solid #217346; }
.heads th { background: #efefef; color: #000; border-right: 1px solid #999; }
.heads td:nth-child(-n+5) { background: #d9e8f6; text-align: center; font-weight: 700; border-right: 0; border-bottom: 1px solid #000; box-shadow: none; padding: 0 0 2px; }
td.rest { border-right: 0; background: repeating-linear-gradient(90deg, transparent 0 71px, #e0e0e0 71px 72px); }
.vscroll { width: 20px; padding: 3px 4px; display: flex; flex-direction: column; align-items: center; gap: 4px; background: #f3f3f3; }
.vscroll svg, .hscroll svg { width: 10px; height: 10px; fill: #6e6e6e; }
.vthumb { width: 10px; height: 122px; border-radius: 5px; background: #6e6e6e; }
.end { margin-top: auto; }

.sheets { flex: none; display: flex; align-items: center; height: 31px; padding: 0 18px 2px 16px; }
.nav { width: 32px; }
.nav svg { fill: none; stroke: #999; stroke-width: 1.200; }
.sheet { align-self: flex-start; width: 68px; height: 28px; margin-left: 36px; background: #fff; border-radius: 0 0 4px 4px; font-size: 14px; box-shadow: 0 1px 2px #0003; }
.sheet span { line-height: 22px; border-bottom: 2px solid #107c41; }
.bar { width: 1px; height: 18px; margin: 0 31px 0 4px; background: #ccc; }
.plus svg { stroke: #333; }
.sheets .dots { margin-left: auto; width: 18px; font-size: 15px; }
.hscroll { display: flex; align-items: center; gap: 4px; width: 38%; height: 18px; padding: 0 3px; border-radius: 9px; background: #f5f5f5; flex-basis: 730px; }
.hthumb { flex: 1; height: 9px; margin-right: 9px; border-radius: 5px; background: #6e6e6e; }

.status { flex: none; display: flex; align-items: center; height: 22px; padding: 0 19px 0 12px; background: #f4f4f4; border-top: 1px solid #c8c8c8; }
.rec { margin-left: 18px; }
.stats { display: flex; gap: 18px; margin-left: auto; margin-right: 18px; }
.view { width: 40px; height: 21px; }
.view svg, .zb svg { fill: none; stroke: #333; }
.view.on { background: #dedede; }
.zb { width: 14px; }
.view + .zb { margin-left: 4px; }
input[type=range] { appearance: none; width: 102px; height: 16px; margin: 0 2px; background: linear-gradient(#777, #777) center / 100% 1px no-repeat; }
input[type=range]::-webkit-slider-thumb { appearance: none; width: 5px; height: 12px; background: #6e6e6e; }
.pct100 { margin-left: 8px; font-size: 13px; }

.dialog { position: absolute; left: 543px; top: 350px; width: 289px; border: 1px solid #6e6e6e; background: #efefef; box-shadow: 0 6px 22px #0008; color: #000; }
.dtitle { display: flex; align-items: center; height: 30px; padding-left: 8px; background: #fff; }
.dtitle span { flex: 1; }
.dtitle button { width: 45px; font-size: 14px; }
.dbody { display: flex; flex-direction: column; padding: 7px 6px 9px; }
.dlist { display: flex; height: 154px; margin: 4px 0; border: 1px solid #828790; background: #fff; padding: 1px; }
.dlist select { flex: 1; }
.dscroll { display: flex; flex-direction: column; justify-content: space-between; width: 17px; padding: 5px 3px; background: #efefef; }
.dscroll path { fill: none; stroke: #b5b5b5; stroke-width: 2; }
.dref { display: flex; align-items: center; height: 23px; margin: 3px 0 13px; border: 1px solid #abadb3; background: #fff; }
.dref input { order: 2; flex: 1; }
.dref i { width: 1px; height: 15px; margin-left: 2px; background: #000; }
.dbtns { display: flex; gap: 10px; padding-right: 1px; }
.dbtns button { width: 74px; height: 25px; border: 1px solid #adadad; background: #e1e1e1; }
.dbtns .special { width: 92px; margin-right: auto; }
.dbtns .ok { border: 2px solid #0078d7; }
.frame { position: absolute; left: 542px; top: 615px; width: 106px; height: 37px; border: 7px solid #f00; border-radius: 7px; box-shadow: 2px 2px 6px #0007, inset 1px 2px 6px #0007; }
.note { position: absolute; color: #f00; font: 400 46px/60px "Noto Sans CJK JP", sans-serif; font-feature-settings: normal; -webkit-text-stroke: 7px #fff; paint-order: stroke fill; filter: drop-shadow(2px 3px 3px #0009); white-space: nowrap; }
.half { font-feature-settings: "hwid"; }
.n10 { left: 492px; top: 269px; display: flex; gap: 18px; }
.n9 { left: 291px; top: 531px; }
.n11 { left: 570px; top: 650px; }
```
